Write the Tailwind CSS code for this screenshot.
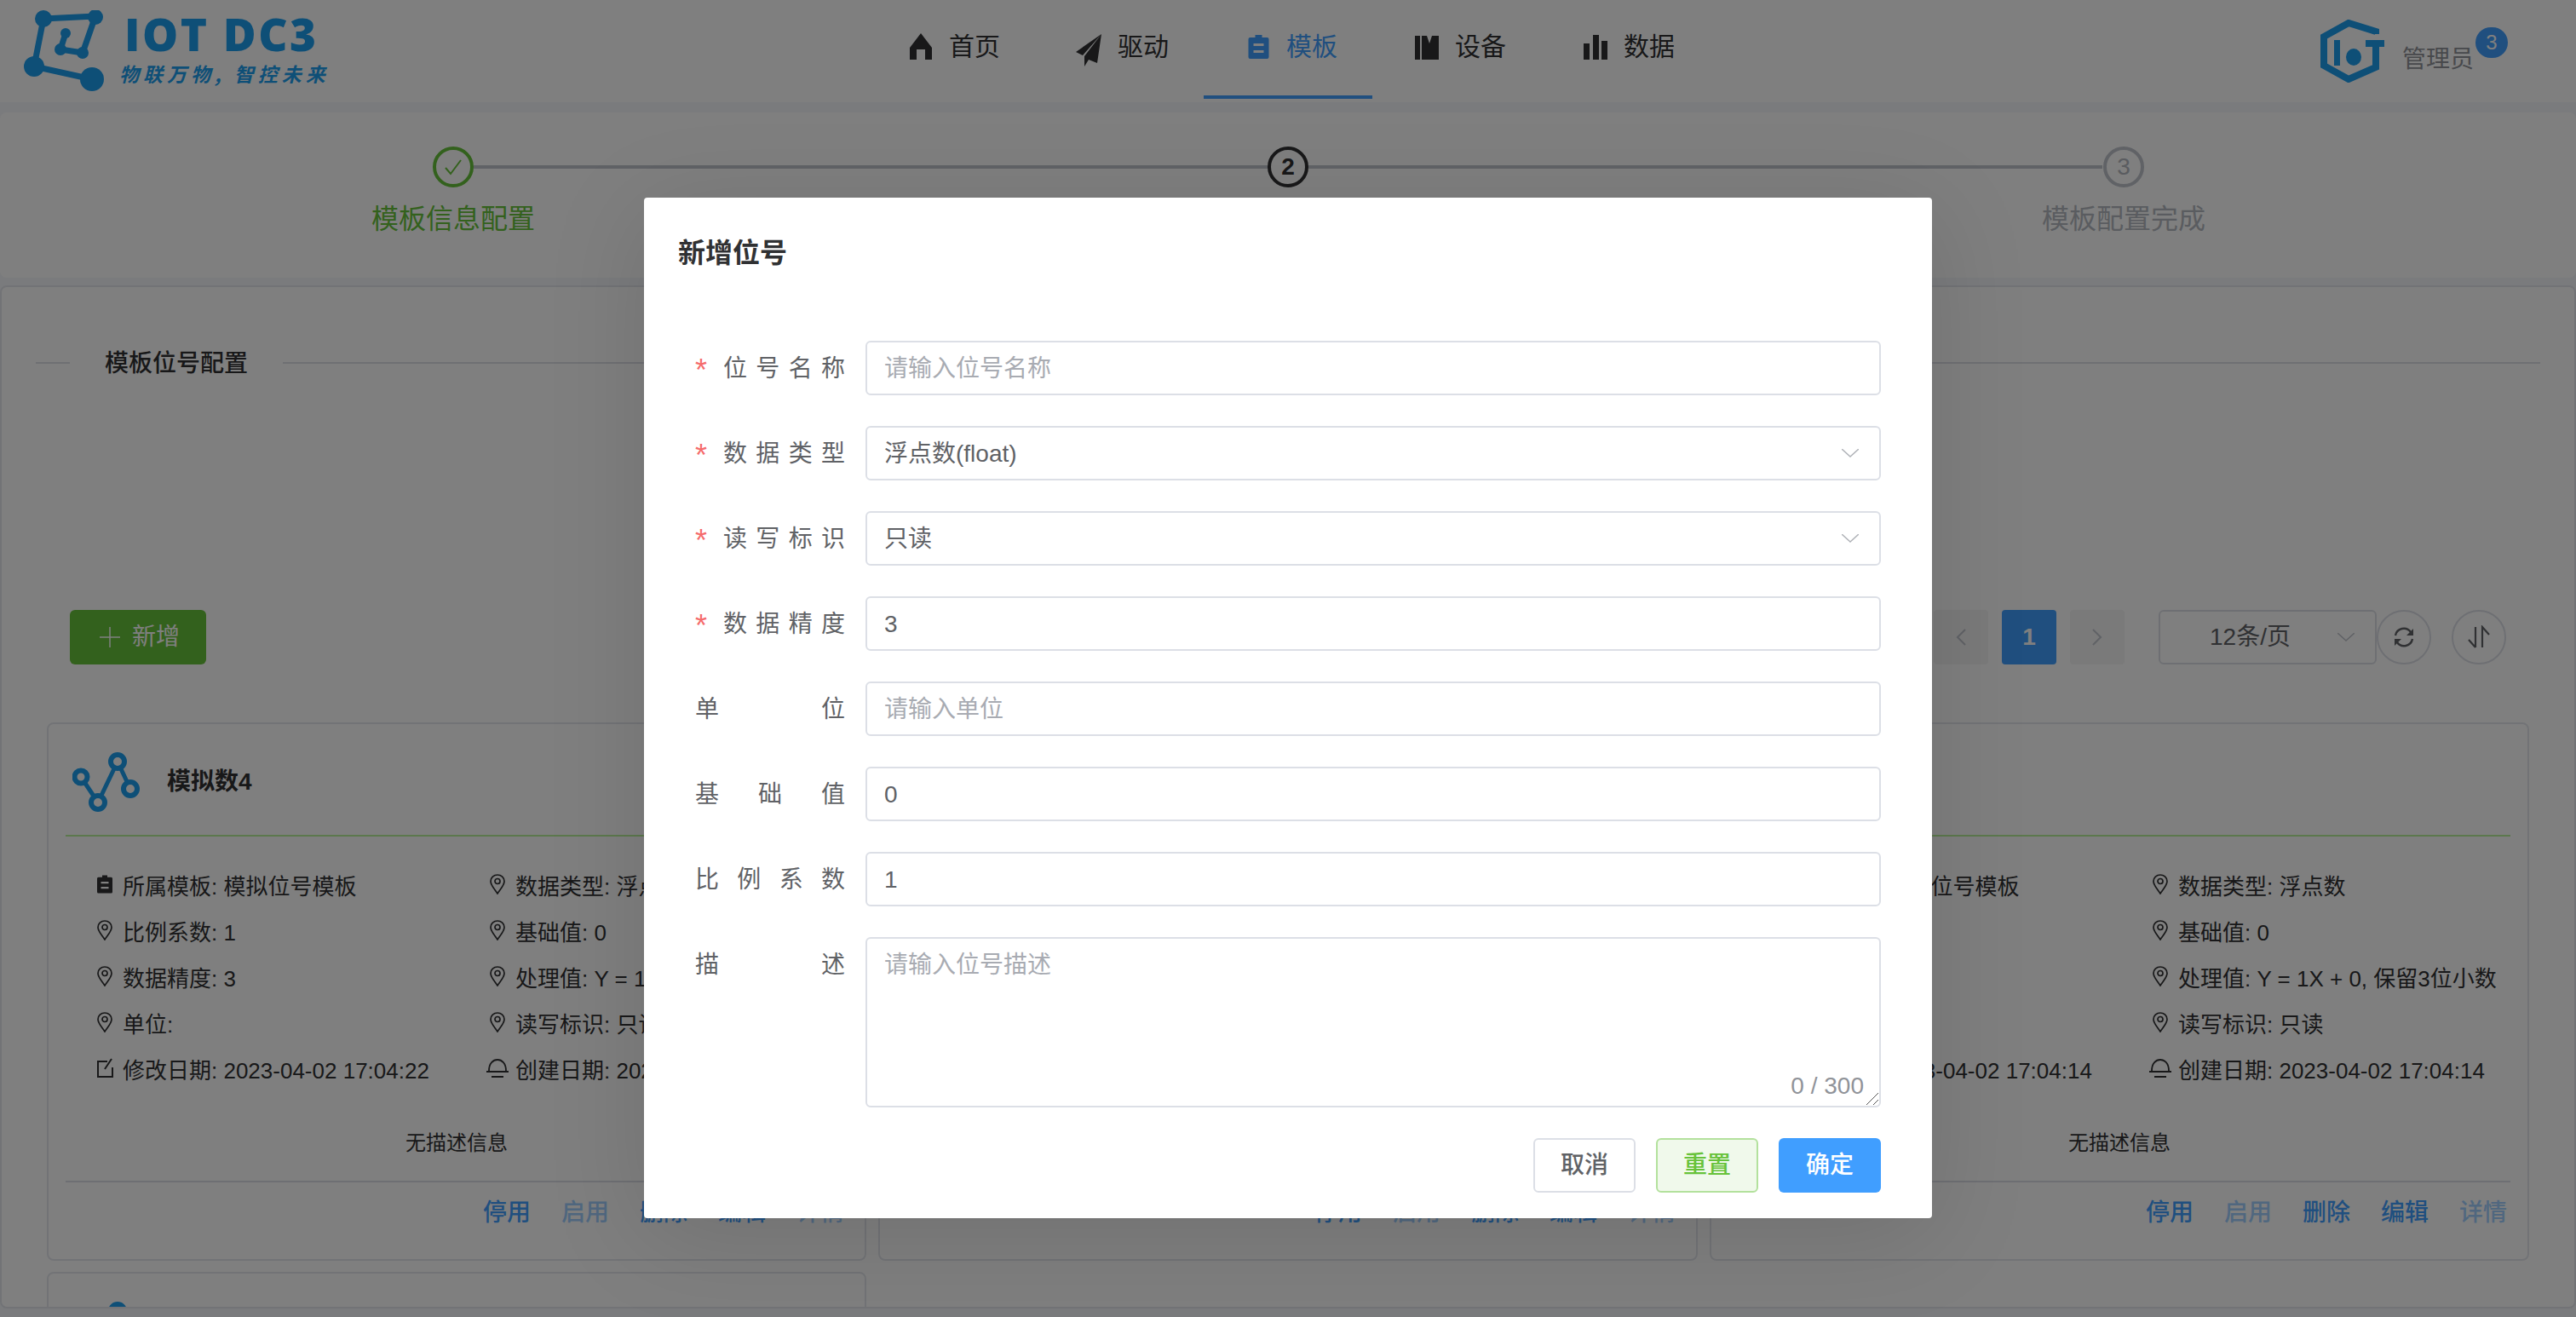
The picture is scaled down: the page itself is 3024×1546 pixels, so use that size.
<!doctype html>
<html lang="en">

<head>
    <meta charset="UTF-8" />
    <meta name="viewport" content="width=device-width, initial-scale=1.0" />
    <script src="https://cdn.jsdelivr.net/npm/@tailwindcss/browser@4"></script>
</head>

<body>
    <div class="relative w-[3024px] h-[1546px] overflow-hidden bg-[#f4f6fa] text-[#303133] font-['Liberation_Sans','Noto_Sans_CJK_SC',sans-serif]">

        <!-- icons shared by the nav and the cards -->
        <svg class="hidden">
            <symbol id="i-clip" viewBox="0 0 24 28"><path fill="currentColor" fill-rule="evenodd" d="M8 0h8v3h6a2 2 0 0 1 2 2v21a2 2 0 0 1-2 2H2a2 2 0 0 1-2-2V5a2 2 0 0 1 2-2h6zM6 10v3h12v-3zM6 18v3h12v-3z" /></symbol>
            <symbol id="i-pin" viewBox="0 0 18 24"><path fill="none" stroke="currentColor" stroke-width="1.7" d="M9 23C5 17 1 13 1 8.500a8 7.500 0 0 1 16 0C17 13 13 17 9 23z" /><circle cx="9" cy="8.500" r="3" fill="none" stroke="currentColor" stroke-width="1.700" /></symbol>
            <symbol id="i-edit" viewBox="0 0 20 24"><path fill="none" stroke="currentColor" stroke-width="2" d="M12 4H1v18h17V11M9 13 17 1" /></symbol>
            <symbol id="i-dome" viewBox="0 0 26 24"><path fill="none" stroke="currentColor" stroke-width="1.800" d="M3 15C3 6 8 2 13 2s10 4 10 13M0 16h26M6 22h14" /></symbol>
            <symbol id="i-nodes" viewBox="0 0 80 70"><g fill="none" stroke="currentColor" stroke-width="5"><path d="M10 29 30 59 53 11 68 43" /><circle cx="10" cy="29" r="7.500" stroke-width="6" fill="#fff" /><circle cx="30" cy="59" r="8" stroke-width="6" fill="#fff" /><circle cx="53" cy="11" r="8" stroke-width="6" fill="#fff" /><circle cx="68" cy="43" r="8" stroke-width="6" fill="#fff" /></g></symbol>
        </svg>

        <!-- header -->
        <header class="h-[120px] bg-white flex">
            <div class="relative w-[1017px] shrink-0">
                <svg class="absolute left-[27px] top-[12px] w-[96px] h-[96px] text-[#1c9eee]" viewBox="27 12 96 96">
                    <g fill="none" stroke="currentColor" stroke-width="7">
                        <path d="M51 22 112 19 97 62 71 58 77 39" />
                        <path d="M51 22 40 78 108 93" />
                    </g>
                    <g fill="currentColor">
                        <circle cx="51" cy="22" r="10" /><circle cx="112" cy="20" r="9" /><circle cx="40" cy="78" r="12" /><circle cx="108" cy="93" r="14" />
                        <circle cx="77" cy="39" r="6" /><circle cx="71" cy="58" r="7" /><circle cx="97" cy="62" r="7" />
                    </g>
                </svg>
                <div class="absolute left-[146px] top-[6px] text-[53px] leading-[68px] font-extrabold text-[#1c9eee] font-['Open_Sans',sans-serif] tracking-[2.500px] whitespace-nowrap">IOT DC3</div>
                <div class="absolute left-[140px] top-[70px] text-[23px] leading-[32px] text-[#1c9eee] font-bold italic tracking-[5px] whitespace-nowrap font-['Noto_Sans_CJK_SC',sans-serif]">物联万物, 智控未来</div>
            </div>
            <nav class="flex text-[30px] leading-[56px]">
                <a class="w-[198px] h-[116px] pl-[50px] pt-[27px] flex gap-[19px]">
                    <svg class="w-[28px] h-[56px]" viewBox="0 0 28 56"><path fill="#303133" d="M14 12 27 29V43H19V31H9V43H1V29z" /></svg>首页
                </a>
                <a class="w-[198px] h-[116px] pl-[48px] pt-[27px] flex gap-[19px]">
                    <svg class="w-[30px] h-[56px]" viewBox="0 0 30 56"><path fill="#303133" d="M30 13 0 34l8 4zM30 13 10 39l0 12 5-8 10 4z" /></svg>驱动
                </a>
                <a class="w-[198px] h-[116px] pl-[52px] pt-[27px] flex gap-[20px] border-b-4 border-[#409eff] text-[#409eff]">
                    <svg class="w-[25px] h-[56px] text-[#409eff]"><use href="#i-clip" y="14" height="28" width="25" /></svg>模板
                </a>
                <a class="w-[198px] h-[116px] pl-[50px] pt-[27px] flex gap-[19px]">
                    <svg class="w-[28px] h-[56px]" viewBox="0 0 28 56"><path fill="#303133" fill-rule="evenodd" d="M0 15h6v28H0zM8 15h6l3 9 3-9h8v28H8z" /></svg>设备
                </a>
                <a class="w-[198px] h-[116px] pl-[50px] pt-[27px] flex gap-[19px]">
                    <svg class="w-[28px] h-[56px]" viewBox="0 0 28 56"><path fill="#303133" d="M0 24h7v19H0zM11 14h7v29h-7zM21 21h7v22h-7z" /></svg>数据
                </a>
            </nav>
            <div class="relative flex-1">
                <svg class="absolute left-[716px] top-[23px] w-[76px] h-[74px] text-[#1c9eee]" viewBox="0 0 76 74">
                    <path fill="none" stroke="currentColor" stroke-width="8" d="M66 17V14L34 4 5 20V54L34 70 66 56V28" />
                    <path fill="currentColor" d="M17 24h7v30h-7zM54 24h22v8H54z" />
                    <ellipse cx="40" cy="44" rx="9" ry="10" fill="currentColor" />
                </svg>
                <span class="absolute left-[813px] top-[50px] text-[28px] leading-[40px] text-[#909399]">管理员</span>
                <span class="absolute left-[899px] top-[32px] w-[38px] h-[36px] rounded-full bg-[#409eff] text-white text-[24px] leading-[36px] text-center">3</span>
            </div>
        </header>

        <main class="pt-[12px]">
            <!-- steps -->
            <section class="h-[194px] bg-white rounded-[8px] relative text-[32px]">
                <div class="absolute left-[556px] right-[556px] top-[62px] h-[4px] bg-[#c0c4cc]"></div>
                <div class="absolute left-[340px] w-[384px] top-[40px] flex flex-col items-center text-[#67c23a]">
                    <div class="w-[48px] h-[48px] rounded-full border-4 border-[#67c23a] bg-white flex items-center justify-center">
                        <svg class="w-[24px] h-[24px]" viewBox="0 0 24 24"><path fill="none" stroke="currentColor" stroke-width="2" d="M3 13l6 7L21 4" /></svg>
                    </div>
                    <div class="mt-[12px] leading-[50px]">模板信息配置</div>
                </div>
                <div class="absolute left-[1320px] w-[384px] top-[40px] flex flex-col items-center text-[#303133] font-bold">
                    <div class="w-[48px] h-[48px] rounded-full border-4 border-[#303133] bg-white flex items-center justify-center text-[28px]">2</div>
                    <div class="mt-[12px] leading-[50px]">模板位号配置</div>
                </div>
                <div class="absolute left-[2301px] w-[384px] top-[40px] flex flex-col items-center text-[#b4b8c0]">
                    <div class="w-[48px] h-[48px] rounded-full border-4 border-[#c0c4cc] bg-white flex items-center justify-center text-[28px]">3</div>
                    <div class="mt-[12px] leading-[50px]">模板配置完成</div>
                </div>
            </section>

            <!-- point list -->
            <section class="mt-[9px] h-[1201px] bg-white rounded-[8px] border-2 border-[#e4e7ed] overflow-hidden">
                <div class="relative h-[100px] pt-[88px]">
                    <div class="ml-[40px] mr-[40px] h-[2px] bg-[#dcdfe6]"></div>
                    <span class="absolute left-[80px] top-[70px] px-[41px] bg-white text-[28px] leading-[40px] font-medium">模板位号配置</span>
                </div>

                <div class="mt-[279px] flex h-[64px] pl-[80px] pr-[80px] items-start">
                    <button class="w-[160px] h-[64px] rounded-[6px] bg-[#67c23a] text-white text-[28px] flex items-center justify-center gap-[14px] pl-[4px]">
                        <svg class="w-[24px] h-[24px]" viewBox="0 0 24 24"><path stroke="currentColor" stroke-width="1.500" d="M12 0v24M0 12h24" /></svg>新增
                    </button>
                    <div class="ml-auto flex items-center text-[#c0c4cc]">
                        <span class="w-[64px] h-[64px] rounded-[4px] bg-[#f4f4f5] flex items-center justify-center">
                            <svg class="w-[12px] h-[20px]" viewBox="0 0 12 20"><path fill="none" stroke="currentColor" stroke-width="2" d="M11 1 2 10l9 9" /></svg>
                        </span>
                        <span class="ml-[16px] w-[64px] h-[64px] rounded-[4px] bg-[#409eff] text-white font-bold text-[28px] flex items-center justify-center">1</span>
                        <span class="ml-[16px] w-[64px] h-[64px] rounded-[4px] bg-[#f4f4f5] flex items-center justify-center">
                            <svg class="w-[12px] h-[20px]" viewBox="0 0 12 20"><path fill="none" stroke="currentColor" stroke-width="2" d="M1 1l9 9-9 9" /></svg>
                        </span>
                        <span class="ml-[40px] w-[256px] h-[64px] rounded-[6px] border-2 border-[#dcdfe6] relative text-[#606266] text-[28px] leading-[60px] pl-[58px]">12条/页
                            <svg class="absolute right-[24px] top-[25px] w-[20px] h-[10px] text-[#c0c4cc]" viewBox="0 0 20 10"><path fill="none" stroke="currentColor" stroke-width="1.500" d="M0 0l10 9 10-9" /></svg>
                        </span>
                        <span class="w-[64px] h-[64px] rounded-full border-2 border-[#dcdfe6] flex items-center justify-center text-[#606266]">
                            <svg class="w-[26px] h-[26px]" viewBox="0 0 26 26"><path fill="none" stroke="currentColor" stroke-width="2.400" d="M3 11a10 10 0 0 1 18-4M23 15a10 10 0 0 1-18 4" /><path fill="currentColor" d="M24 3v8h-8zM2 23v-8h8z" /></svg>
                        </span>
                        <span class="ml-[24px] w-[64px] h-[64px] rounded-full border-2 border-[#dcdfe6] flex items-center justify-center text-[#606266]">
                            <svg class="w-[26px] h-[28px]" viewBox="0 0 26 28"><path fill="none" stroke="currentColor" stroke-width="2.200" d="M9 2v24M9 26 1 17M17 26V2l8 9" /></svg>
                        </span>
                    </div>
                </div>

                <div id="cards" class="mt-[68px] ml-[53px] w-[2914px] grid grid-cols-3 gap-x-[14px] gap-y-[13px]"></div>
            </section>
        </main>

        <!-- dialog -->
        <div class="absolute inset-0 bg-black/50"></div>
        <div class="absolute left-[756px] top-[232px] w-[1512px] h-[1198px] bg-white rounded-[4px] shadow-[0_20px_120px_rgba(0,0,0,0.12)] pl-[40px] pr-[60px]">
            <h2 class="pt-[42px] text-[32px] leading-[46px] font-bold">新增位号</h2>

            <form class="mt-[80px] flex flex-col gap-[36px] text-[28px] text-[#606266]">
                <div class="flex h-[64px]">
                    <label class="w-[176px] ml-[20px] mr-[24px] flex leading-[66px]"><span class="w-[33px] text-[36px] leading-[70px] text-[#f56c6c]">*</span><span class="flex-1 [text-align-last:justify]">位号名称</span></label>
                    <div class="flex-1 border-2 border-[#dcdfe6] rounded-[6px] pl-[20px] leading-[62px] text-[#a8abb2]">请输入位号名称</div>
                </div>
                <div class="flex h-[64px]">
                    <label class="w-[176px] ml-[20px] mr-[24px] flex leading-[66px]"><span class="w-[33px] text-[36px] leading-[70px] text-[#f56c6c]">*</span><span class="flex-1 [text-align-last:justify]">数据类型</span></label>
                    <div class="flex-1 border-2 border-[#dcdfe6] rounded-[6px] pl-[20px] leading-[62px] relative">浮点数(float)
                        <svg class="absolute right-[24px] top-[25px] w-[20px] h-[10px] text-[#b0b3b8]" viewBox="0 0 20 10"><path fill="none" stroke="currentColor" stroke-width="1.500" d="M0 0l10 9 10-9" /></svg>
                    </div>
                </div>
                <div class="flex h-[64px]">
                    <label class="w-[176px] ml-[20px] mr-[24px] flex leading-[66px]"><span class="w-[33px] text-[36px] leading-[70px] text-[#f56c6c]">*</span><span class="flex-1 [text-align-last:justify]">读写标识</span></label>
                    <div class="flex-1 border-2 border-[#dcdfe6] rounded-[6px] pl-[20px] leading-[62px] relative">只读
                        <svg class="absolute right-[24px] top-[25px] w-[20px] h-[10px] text-[#b0b3b8]" viewBox="0 0 20 10"><path fill="none" stroke="currentColor" stroke-width="1.500" d="M0 0l10 9 10-9" /></svg>
                    </div>
                </div>
                <div class="flex h-[64px]">
                    <label class="w-[176px] ml-[20px] mr-[24px] flex leading-[66px]"><span class="w-[33px] text-[36px] leading-[70px] text-[#f56c6c]">*</span><span class="flex-1 [text-align-last:justify]">数据精度</span></label>
                    <div class="flex-1 border-2 border-[#dcdfe6] rounded-[6px] pl-[20px] leading-[62px]">3</div>
                </div>
                <div class="flex h-[64px]">
                    <label class="w-[176px] ml-[20px] mr-[24px] leading-[66px] [text-align-last:justify]">单位</label>
                    <div class="flex-1 border-2 border-[#dcdfe6] rounded-[6px] pl-[20px] leading-[62px] text-[#a8abb2]">请输入单位</div>
                </div>
                <div class="flex h-[64px]">
                    <label class="w-[176px] ml-[20px] mr-[24px] leading-[66px] [text-align-last:justify]">基础值</label>
                    <div class="flex-1 border-2 border-[#dcdfe6] rounded-[6px] pl-[20px] leading-[62px]">0</div>
                </div>
                <div class="flex h-[64px]">
                    <label class="w-[176px] ml-[20px] mr-[24px] leading-[66px] [text-align-last:justify]">比例系数</label>
                    <div class="flex-1 border-2 border-[#dcdfe6] rounded-[6px] pl-[20px] leading-[62px]">1</div>
                </div>
                <div class="flex h-[200px]">
                    <label class="w-[176px] ml-[20px] mr-[24px] leading-[66px] [text-align-last:justify]">描述</label>
                    <div class="flex-1 border-2 border-[#dcdfe6] rounded-[6px] pl-[20px] pt-[6px] leading-[50px] text-[#a8abb2] relative">请输入位号描述
                        <span class="absolute right-[18px] bottom-[5px] text-[28px] leading-[36px] text-[#909399]">0 / 300</span>
                        <svg class="absolute right-0 bottom-0 w-[16px] h-[16px]" viewBox="0 0 16 16"><path fill="none" stroke="#555" stroke-width="1" d="M1 15 15 1M9 15l6-6" /></svg>
                    </div>
                </div>
            </form>

            <div class="mt-[36px] flex justify-end gap-[24px] text-[28px] font-medium">
                <button class="w-[120px] h-[64px] rounded-[6px] border-2 border-[#dcdfe6] text-[#606266]">取消</button>
                <button class="w-[120px] h-[64px] rounded-[6px] border-2 border-[#b3e19d] bg-[#f0f9eb] text-[#67c23a]">重置</button>
                <button class="w-[120px] h-[64px] rounded-[6px] bg-[#409eff] text-white">确定</button>
            </div>
        </div>
    </div>

    <script>
        const points = [
            { name: "模拟数4", date: "2023-04-02 17:04:22" },
            { name: "模拟数3", date: "2023-04-02 17:04:18" },
            { name: "模拟数2", date: "2023-04-02 17:04:14" },
            { name: "模拟数1", date: "2023-04-02 17:04:10" }
        ];

        function row(icon, text, size) {
            return `<div class="flex items-center h-[54px] whitespace-nowrap">
                <span class="w-[30px] shrink-0 -mt-[6px]"><svg class="${size}"><use href="#${icon}" /></svg></span>${text}
            </div>`;
        }

        document.getElementById("cards").innerHTML = points.map(function (p) {
            return `<div class="h-[632px] rounded-[8px] border-2 border-[#e4e7ed] px-[20px] bg-white">
                <div class="h-[132px] border-b-2 border-[#b8f09a] flex items-center pt-[6px]">
                    <svg class="ml-[8px] w-[80px] h-[70px] text-[#1c9eee]"><use href="#i-nodes" /></svg>
                    <span class="ml-[31px] text-[28px] font-bold">${p.name}</span>
                </div>
                <div class="mt-[32px] ml-[37px] grid grid-cols-[461px_1fr] text-[26px]">
                    ${row("i-clip", "所属模板: 模拟位号模板", "w-[18px] h-[22px]")}
                    ${row("i-pin", "数据类型: 浮点数", "w-[18px] h-[24px]")}
                    ${row("i-pin", "比例系数: 1", "w-[18px] h-[24px]")}
                    ${row("i-pin", "基础值: 0", "w-[18px] h-[24px]")}
                    ${row("i-pin", "数据精度: 3", "w-[18px] h-[24px]")}
                    ${row("i-pin", "处理值: Y = 1X + 0, 保留3位小数", "w-[18px] h-[24px]")}
                    ${row("i-pin", "单位:", "w-[18px] h-[24px]")}
                    ${row("i-pin", "读写标识: 只读", "w-[18px] h-[24px]")}
                    ${row("i-edit", "修改日期: " + p.date, "w-[20px] h-[24px]")}
                    ${row("i-dome", "创建日期: " + p.date, "-ml-[4px] w-[26px] h-[24px]")}
                </div>
                <div class="mt-[38px] text-center text-[24px] leading-[40px]">无描述信息</div>
                <div class="mt-[24px] border-t-2 border-[#dcdfe6] flex justify-end gap-[36px] pr-[4px] pt-[16px] text-[28px] leading-[40px] font-medium text-[#409eff]">
                    <span>停用</span><span class="text-[#a0cfff]">启用</span><span>删除</span><span>编辑</span><span class="text-[#a0cfff]">详情</span>
                </div>
            </div>`;
        }).join("");
    </script>
</body>

</html>
